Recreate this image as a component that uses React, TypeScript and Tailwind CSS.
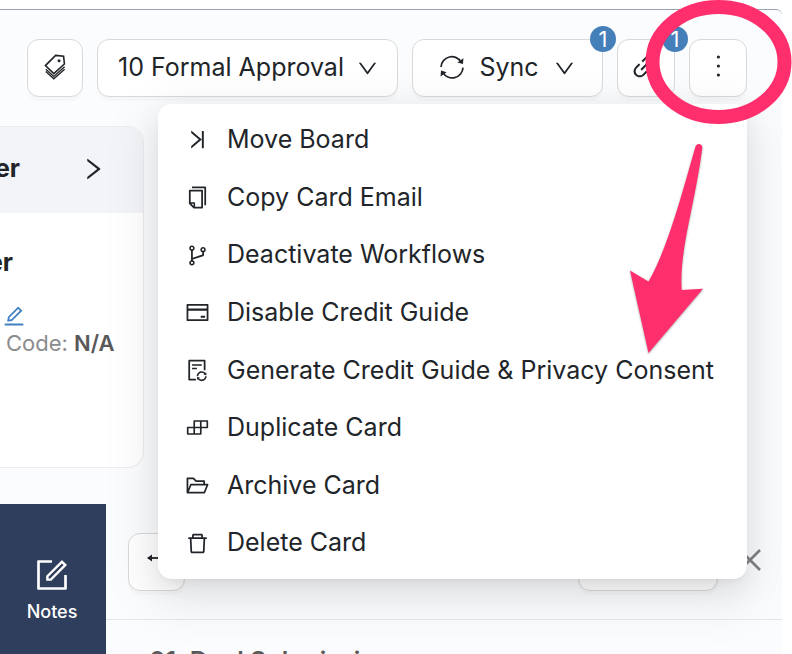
import React from 'react';
import {
  AiOutlineDown,
  AiOutlineLink,
  AiOutlineRight,
  AiOutlineEdit,
  AiOutlineForm,
  AiOutlineVerticalLeft,
  AiOutlineCopy,
  AiOutlineBranches,
  AiOutlineCreditCard,
  AiOutlineFileSync,
  AiOutlineBuild,
  AiOutlineFolderOpen,
  AiOutlineDelete,
} from 'react-icons/ai';

const menuItems = [
  { label: 'Move Board', icon: AiOutlineVerticalLeft },
  { label: 'Copy Card Email', icon: AiOutlineCopy },
  { label: 'Deactivate Workflows', icon: AiOutlineBranches },
  { label: 'Disable Credit Guide', icon: AiOutlineCreditCard },
  { label: 'Generate Credit Guide & Privacy Consent', icon: AiOutlineFileSync },
  { label: 'Duplicate Card', icon: AiOutlineBuild },
  { label: 'Archive Card', icon: AiOutlineFolderOpen },
  { label: 'Delete Card', icon: AiOutlineDelete },
];

const toolButton =
  'relative flex h-[58px] shrink-0 items-center justify-center rounded-xl border border-[#d9d9d9] bg-white shadow-[0_4px_0_rgba(0,0,0,0.02)]';

const TagsIcon = () => (
  <svg width="26" height="28" viewBox="0 0 26 28" fill="none" stroke="currentColor" strokeWidth="1.6">
    <path d="M13.6 1.4L21.6 2.2L22.4 10L11.8 19.6L3.4 11.6Z" />
    <path d="M3.8 15.2L11.8 22.4L22.6 12.8M3.8 17.4L11.8 24.8L22.6 15.2" strokeWidth="1.3" />
    <circle cx="17" cy="6.8" r="1.5" fill="currentColor" stroke="none" />
  </svg>
);

const SyncIcon = () => (
  <svg width="26" height="26" viewBox="0 0 26 26" fill="none" stroke="currentColor" strokeWidth="1.7">
    <path d="M2 12A10.8 10.8 0 0 1 22.2 7.2" />
    <path d="M24 12.6A10.8 10.8 0 0 1 3.8 17.4" />
    <path d="M24.4 3.2L24 9L18.4 7.4Z" fill="currentColor" stroke="none" />
    <path d="M1.6 21.4L2 15.6L7.6 17.2Z" fill="currentColor" stroke="none" />
  </svg>
);

const MoreIcon = () => (
  <svg width="26" height="26" viewBox="0 0 26 26" fill="currentColor">
    <circle cx="13.4" cy="4" r="1.6" />
    <circle cx="13.4" cy="13" r="1.6" />
    <circle cx="13.4" cy="22" r="1.6" />
  </svg>
);

const BackIcon = () => (
  <svg width="22" height="12" viewBox="0 0 22 12" fill="none" stroke="currentColor" strokeWidth="1.8">
    <path d="M2 6H21" />
    <path d="M6 2.4V9.6L1 6Z" fill="currentColor" stroke="none" />
  </svg>
);

const CloseIcon = () => (
  <svg width="24" height="24" viewBox="0 0 24 24" fill="none" stroke="currentColor" strokeWidth="2.6">
    <path d="M2 2L22 22M22 2L2 22" />
  </svg>
);

const Badge: React.FC<{ count: number }> = ({ count }) => (
  <span className="absolute -top-[14px] -right-[14px] flex size-[26px] items-center justify-center rounded-full bg-[#457fb9] text-[22px] text-white">
    {count}
  </span>
);

const ActionMenu: React.FC = () => (
  <ul className="absolute top-[64px] -right-px z-10 grid h-[475px] w-[589px] grid-rows-8 rounded-[14px] bg-white p-[7px] shadow-[0_11px_29px_0_rgba(0,0,0,0.08),0_5px_11px_-7px_rgba(0,0,0,0.12),0_16px_50px_14px_rgba(0,0,0,0.06)]">
    {menuItems.map(({ label, icon: Icon }) => (
      <li key={label} className="flex">
        <button className="flex w-full items-center gap-[17px] pl-5 text-left text-[25px] whitespace-nowrap">
          <Icon size={25} className="shrink-0" />
          {label}
        </button>
      </li>
    ))}
  </ul>
);

const Toolbar: React.FC = () => (
  <header className="flex justify-end gap-[14px] pt-[29px] pr-[35px]">
    <button aria-label="Tags" className={`${toolButton} w-14`}>
      <TagsIcon />
    </button>
    <button className={`${toolButton} w-[301px] gap-3 pl-[2px] text-[25px]`}>
      10 Formal Approval
      <AiOutlineDown size={23} />
    </button>
    <button className={`${toolButton} w-[191px] gap-[14px] text-[25px]`}>
      <SyncIcon />
      Sync
      <AiOutlineDown size={23} />
      <Badge count={1} />
    </button>
    <button aria-label="Links" className={`${toolButton} w-[58px] pr-1 pb-1`}>
      <AiOutlineLink size={29} />
      <Badge count={1} />
    </button>
    <div className={`${toolButton} w-[58px]`}>
      <button aria-label="More actions" className="flex size-full items-center justify-center pb-1">
        <MoreIcon />
      </button>
      <ActionMenu />
    </div>
  </header>
);

const SummaryCard: React.FC = () => (
  <section className="mt-[29px] h-[342px] w-36 overflow-hidden rounded-r-2xl border border-l-0 border-[#ececee] bg-white">
    <div className="flex h-[86px] items-center justify-between bg-[#f3f4f8] pr-9 pb-[2px]">
      <span className="flex w-5 justify-end text-[25px] font-bold">er</span>
      <AiOutlineRight size={28} />
    </div>
    <h2 className="mt-[31px] flex w-[13px] justify-end text-[25px] leading-9 font-bold">er</h2>
    <div className="mt-6 pl-[2px]">
      <a href="#edit" aria-label="Edit" className="block w-fit text-[#4080c0]">
        <AiOutlineEdit size={24} />
      </a>
    </div>
    <p className="pt-px pl-[6px] text-[22px] leading-7 whitespace-nowrap text-[#8c8c8c]">
      Code: <b className="font-semibold text-[#595959]">N/A</b>
    </p>
  </section>
);

const Annotations: React.FC = () => (
  <svg
    className="pointer-events-none absolute top-0 right-0 z-20"
    width="170"
    height="370"
    viewBox="622 0 170 370"
    aria-hidden="true"
  >
    <ellipse cx="718.5" cy="62" rx="66" ry="55" fill="none" stroke="#ff2e6c" strokeWidth="14" />
    <path
      d="M695.5 146.5C696.5 143 702.5 143 702.3 148C695 205 679 250 681.7 290L703 288.7L648.5 353L630 270.5L648.5 281.5C668 248 682 193 695.5 146.5Z"
      fill="#ff2e6c"
      className="drop-shadow-[0_1px_1px_rgba(0,0,0,0.35)]"
    />
  </svg>
);

const App: React.FC = () => {
  return (
    <div className="relative h-screen overflow-hidden bg-white pt-[9px] pr-[10px] font-['Inter',sans-serif] text-[#212529]">
      <main className="flex h-full flex-col overflow-hidden rounded-tr-md border-t border-[#9aa3b5] bg-[#fbfcfe]">
        <Toolbar />
        <SummaryCard />
        <div className="mt-9 flex min-h-0 flex-1">
          <nav className="w-[106px] shrink-0 bg-[#2f3e5c]">
            <button className="flex w-full flex-col items-center pt-[52px] pr-[2px] text-lg leading-6 font-medium text-white">
              <AiOutlineForm size={38} />
              <span className="mt-[6px]">Notes</span>
            </button>
          </nav>
          <section className="min-w-0 flex-1">
            <div className="flex h-[116px] items-center justify-between border-b border-[#e5e7eb] pr-5 pl-[22px]">
              <button aria-label="Back" className={`${toolButton} w-[57px] pb-2`}>
                <BackIcon />
              </button>
              <div className="flex items-center gap-5">
                <button aria-label="View" className={`${toolButton} w-[140px]`} />
                <button aria-label="Close" className="pb-1 text-[#808285]">
                  <CloseIcon />
                </button>
              </div>
            </div>
            <h2 className="mt-[23px] pl-[43px] text-[25px] leading-9 font-semibold whitespace-nowrap text-[#595959]">
              01. Deal Submission
            </h2>
          </section>
        </div>
      </main>
      <Annotations />
    </div>
  );
};

export default App;
